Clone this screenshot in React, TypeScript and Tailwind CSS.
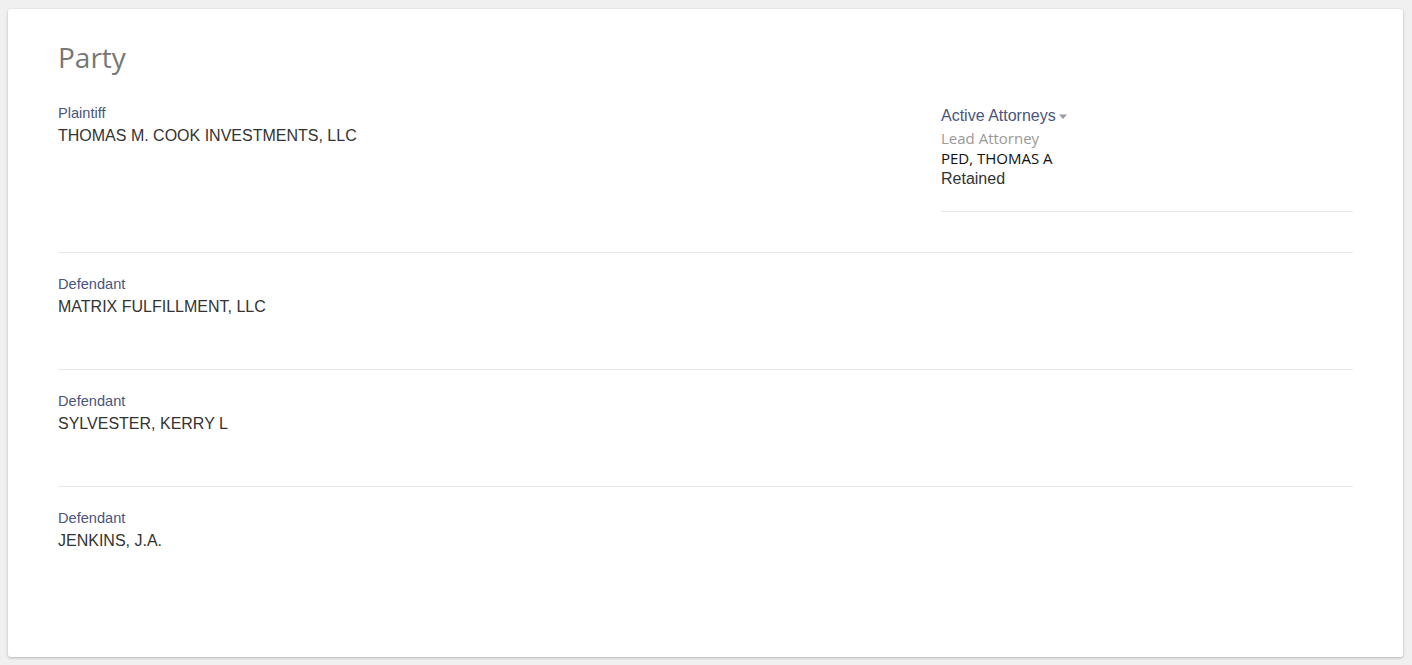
import React from "react";

const arial = "font-['Liberation_Sans',Arial,sans-serif]";
const open = "font-['Open_Sans','Noto_Sans',sans-serif]";

function Party({ role, name }: { role: string; name: string }) {
  return (
    <div className="flex flex-col">
      <div className={`${arial} text-[14.6px] leading-[20px] text-[#4a5580]`}>{role}</div>
      <div className={`${arial} text-[16px] leading-[22px] text-[#333333] mt-[2px]`}>{name}</div>
    </div>
  );
}

export default function App() {
  const defendants = ["MATRIX FULFILLMENT, LLC", "SYLVESTER, KERRY L", "JENKINS, J.A."];
  return (
    <div className="bg-[#f0f0f0] h-[665px] pt-[9px] pl-[8px] pr-[9px]">
      <div className="bg-white rounded-[3px] shadow-[0_1px_3px_rgba(0,0,0,0.25)] h-[648px] px-[50px] pt-[31px]">
        <div className={`${open} text-[28px] leading-[34px] text-[#777777]`}>Party</div>
        <div className="mt-[29px] flex border-b border-[#e8e8e8] pb-[40px]">
          <div className="flex-1">
            <Party role="Plaintiff" name="THOMAS M. COOK INVESTMENTS, LLC" />
          </div>
          <div className="w-[412px] border-b border-[#e8e8e8] pb-[22px] pt-[2px]">
            <div className={`${arial} text-[16px] leading-[22px] text-[#4a5580] flex items-center`}>
              Active Attorneys
              <svg width="10" height="6" viewBox="0 0 10 6" className="ml-[2px] mt-[1px]">
                <path d="M1 0.5 L9 0.5 L5 5 Z" fill="#9a9aa6" />
              </svg>
            </div>
            <div className={`${open} text-[15px] leading-[20px] text-[#999999] mt-[1px]`}>Lead Attorney</div>
            <div className={`${open} text-[15px] leading-[20px] text-[#111111]`}>PED, THOMAS A</div>
            <div className={`${arial} text-[16px] leading-[20px] text-[#333333] mt-[1px]`}>Retained</div>
          </div>
        </div>
        {defendants.map((d, i) => (
          <div
            key={d}
            className={`pt-[21px] pb-[51px] ${i < defendants.length - 1 ? "border-b border-[#e8e8e8]" : ""}`}
          >
            <Party role="Defendant" name={d} />
          </div>
        ))}
      </div>
    </div>
  );
}
